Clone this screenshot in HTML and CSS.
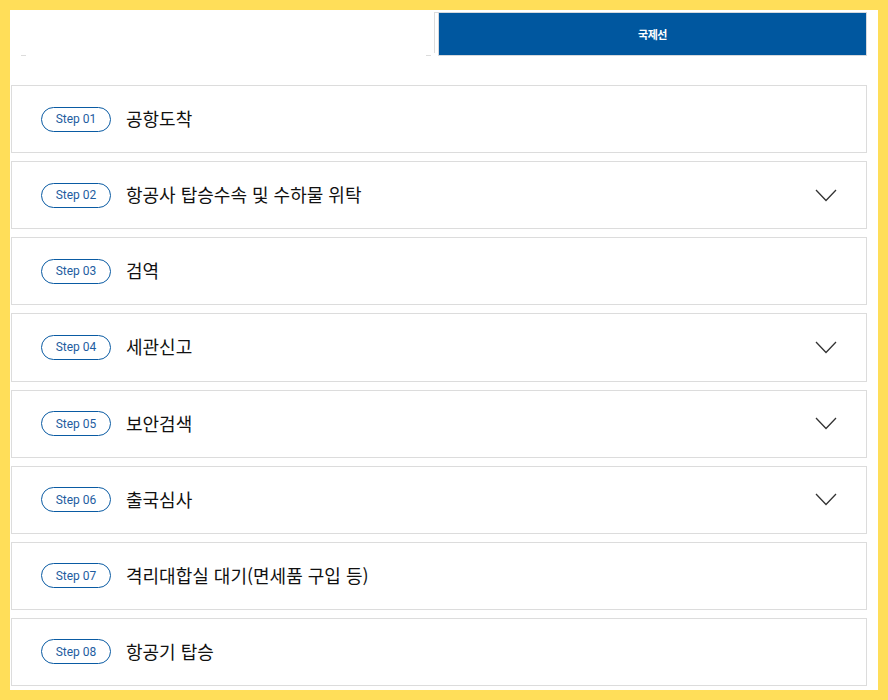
FILE: index.html
```html
<!DOCTYPE html>
<html lang="ko">
<head>
<meta charset="utf-8">
<title>출국절차</title>
<link rel="stylesheet" href="styles.css">
</head>
<body>
<div class="page">
  <div class="tabs">
    <div class="tab tab-left"><span class="tab-corner"></span></div>
    <div class="tab tab-active">국제선</div>
  </div>
  <ul class="steps">
    <li class="step"><span class="pill">Step 01</span><span class="title">공항도착</span></li>
    <li class="step"><span class="pill">Step 02</span><span class="title">항공사 탑승수속 및 수하물 위탁</span><svg class="chev" width="22" height="13" viewBox="0 0 22 13"><polyline points="1,1 11,11.5 21,1" fill="none" stroke="#333" stroke-width="1.3"/></svg></li>
    <li class="step"><span class="pill">Step 03</span><span class="title">검역</span></li>
    <li class="step"><span class="pill">Step 04</span><span class="title">세관신고</span><svg class="chev" width="22" height="13" viewBox="0 0 22 13"><polyline points="1,1 11,11.5 21,1" fill="none" stroke="#333" stroke-width="1.3"/></svg></li>
    <li class="step"><span class="pill">Step 05</span><span class="title">보안검색</span><svg class="chev" width="22" height="13" viewBox="0 0 22 13"><polyline points="1,1 11,11.5 21,1" fill="none" stroke="#333" stroke-width="1.3"/></svg></li>
    <li class="step"><span class="pill">Step 06</span><span class="title">출국심사</span><svg class="chev" width="22" height="13" viewBox="0 0 22 13"><polyline points="1,1 11,11.5 21,1" fill="none" stroke="#333" stroke-width="1.3"/></svg></li>
    <li class="step"><span class="pill">Step 07</span><span class="title">격리대합실 대기(면세품 구입 등)</span></li>
    <li class="step"><span class="pill">Step 08</span><span class="title">항공기 탑승</span></li>
  </ul>
</div>
</body>
</html>
```
FILE: styles.css
```css
html, body {
  margin: 0;
  padding: 0;
}
body {
  background: #ffde59;
  font-family: "Noto Sans CJK KR", "Noto Sans", sans-serif;
}
.page {
  margin: 10px;
  width: 868px;
  height: 680px;
  background: #fff;
  box-sizing: border-box;
  padding: 2px 11px 0 1px;
  overflow: hidden;
}
.tabs {
  display: flex;
  height: 44px;
}
.tab {
  flex: 1 1 0;
  box-sizing: border-box;
}
.tab-left {
  position: relative;
}
.tab-left::before,
.tab-left::after {
  content: "";
  position: absolute;
  bottom: 0;
  width: 5px;
  height: 1px;
  background: #dcdcdc;
}
.tab-left::before { left: 10px; }
.tab-left::after { right: 7px; }
.tab-corner {
  position: absolute;
  right: 0;
  top: 0;
  width: 3px;
  height: 40px;
  border-top: 1px solid #dcdcdc;
  border-left: 1px solid #dcdcdc;
}
.tab-active {
  background: #00579f;
  border: 1px solid #d6d9dd;
  color: #fff;
  font-weight: 700;
  font-size: 11px;
  letter-spacing: -0.5px;
  display: flex;
  align-items: center;
  justify-content: center;
}
.steps {
  list-style: none;
  margin: 29px 0 0;
  padding: 0;
  display: flex;
  flex-direction: column;
  gap: 8px;
}
.step {
  box-sizing: border-box;
  height: 68.14px;
  border: 1px solid #dcdcdc;
  display: flex;
  align-items: center;
  padding: 0 29px 0 29px;
}
.pill {
  box-sizing: border-box;
  width: 70px;
  height: 25px;
  border: 1px solid #0a5ba3;
  border-radius: 13px;
  display: flex;
  align-items: center;
  justify-content: center;
  font-family: Roboto, "Liberation Sans", sans-serif;
  font-size: 12px;
  color: #1e5d9f;
  margin-right: 15px;
  flex: none;
}
.title {
  font-size: 18px;
  color: #111;
  line-height: 1;
  margin-top: -2px;
}
.chev {
  margin-left: auto;
  display: block;
}
```
